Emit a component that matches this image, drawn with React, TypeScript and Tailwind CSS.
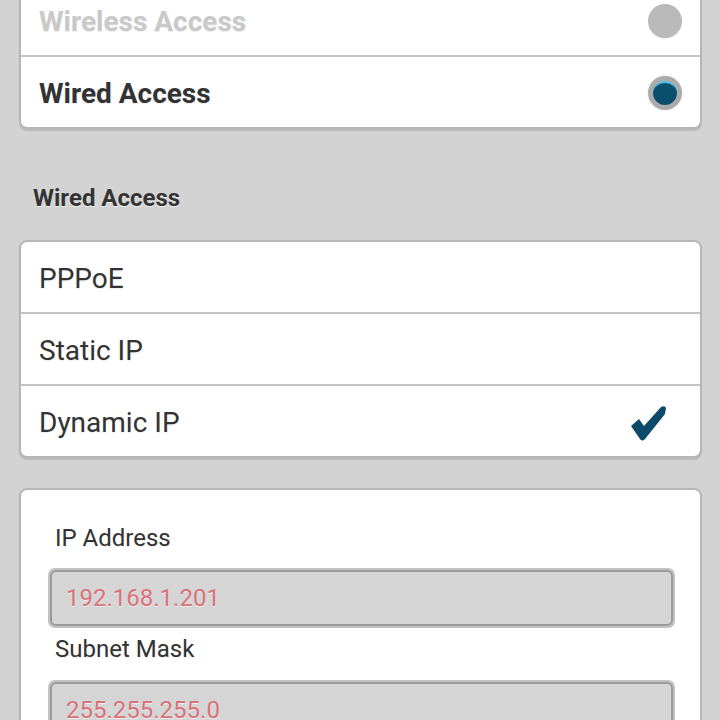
import type { ReactNode } from 'react'

const FONT = "font-['Roboto','Liberation_Sans',sans-serif]"

function Card({ children, className = '' }: { children: ReactNode; className?: string }) {
	return (
		<div
			className={`overflow-hidden rounded-[8px] border-2 border-[#b7b7b7] bg-white shadow-[0_2px_1px_rgba(0,0,0,0.12)] ${className}`}
		>
			{children}
		</div>
	)
}

function Row({ children, last = false }: { children: ReactNode; last?: boolean }) {
	return (
		<div
			className={`flex items-center justify-between pl-[18px] pr-[18px] pt-[3px] ${
				last ? 'h-[70px]' : 'h-[72px] border-b-2 border-[#c4c4c4]'
			}`}
		>
			{children}
		</div>
	)
}

function Radio({ checked }: { checked: boolean }) {
	if (!checked) {
		return <span className="-mt-[2px] block size-[34px] rounded-full bg-[#b9b9b9] shadow-[0_1px_1px_rgba(0,0,0,0.08)]" />
	}
	return (
		<span className="-mt-[2px] flex size-[34px] items-center justify-center rounded-full bg-[#ababab] shadow-[0_0_2px_rgba(0,0,0,0.15)]">
			<span className="block size-[24px] rounded-full border-t-2 border-[#4cc0e8] bg-[#0b4f6f]" />
		</span>
	)
}

function Check() {
	return (
		<svg width="38" height="36" viewBox="0 0 38 36" className="mr-[14px]">
			<path
				d="M1 21 L9 14 L14 21 L31 2 Q35 0 36 3 L35 9 L15 34 Q12 37 10 34 Z"
				fill="#0b4a68"
			/>
		</svg>
	)
}

function Field({ label, value, first = false }: { label: string; value: string; first?: boolean }) {
	return (
		<div>
			<div
				className={`pl-[7px] text-[24px] leading-[30px] text-[#333] ${first ? '' : 'mt-[6px]'}`}
			>
				{label}
			</div>
			<div
				className={`${first ? 'mt-[15px]' : 'mt-[16px]'} rounded-[7px] border-2 border-[#c2c2c2] bg-[#c2c2c2]`}
			>
				<div className="flex h-[56px] items-center rounded-[6px] border-2 border-[#9a9a9a] bg-[#d5d5d5] pl-[14px] text-[24px] text-[#d97179]">
					{value}
				</div>
			</div>
		</div>
	)
}

export default function App() {
	return (
		<div className={`min-h-screen overflow-hidden bg-[#d3d3d3] pl-[19px] pr-[18px] ${FONT} [text-shadow:0_1px_0_#eeeeee]`}>
			<Card className="-mt-[17px]">
				<Row>
					<span className="text-[28px] font-bold text-[#c9c9c9]">Wireless Access</span>
					<Radio checked={false} />
				</Row>
				<Row last>
					<span className="text-[28px] font-bold text-[#333]">Wired Access</span>
					<Radio checked />
				</Row>
			</Card>

			<h2 className="mt-[54px] pl-[14px] text-[24px] leading-[30px] font-bold text-[#333] [text-shadow:0_1px_0_#f0f0f0]">
				Wired Access
			</h2>

			<Card className="mt-[27px]">
				<Row>
					<span className="text-[28px] text-[#333]">PPPoE</span>
				</Row>
				<Row>
					<span className="text-[28px] text-[#333]">Static IP</span>
				</Row>
				<Row last>
					<span className="text-[28px] text-[#333]">Dynamic IP</span>
					<Check />
				</Row>
			</Card>

			<Card className="mt-[30px] pb-[20px] pl-[27px] pr-[25px] pt-[33px]">
				<Field label="IP Address" value="192.168.1.201" first />
				<Field label="Subnet Mask" value="255.255.255.0" />
			</Card>
		</div>
	)
}
